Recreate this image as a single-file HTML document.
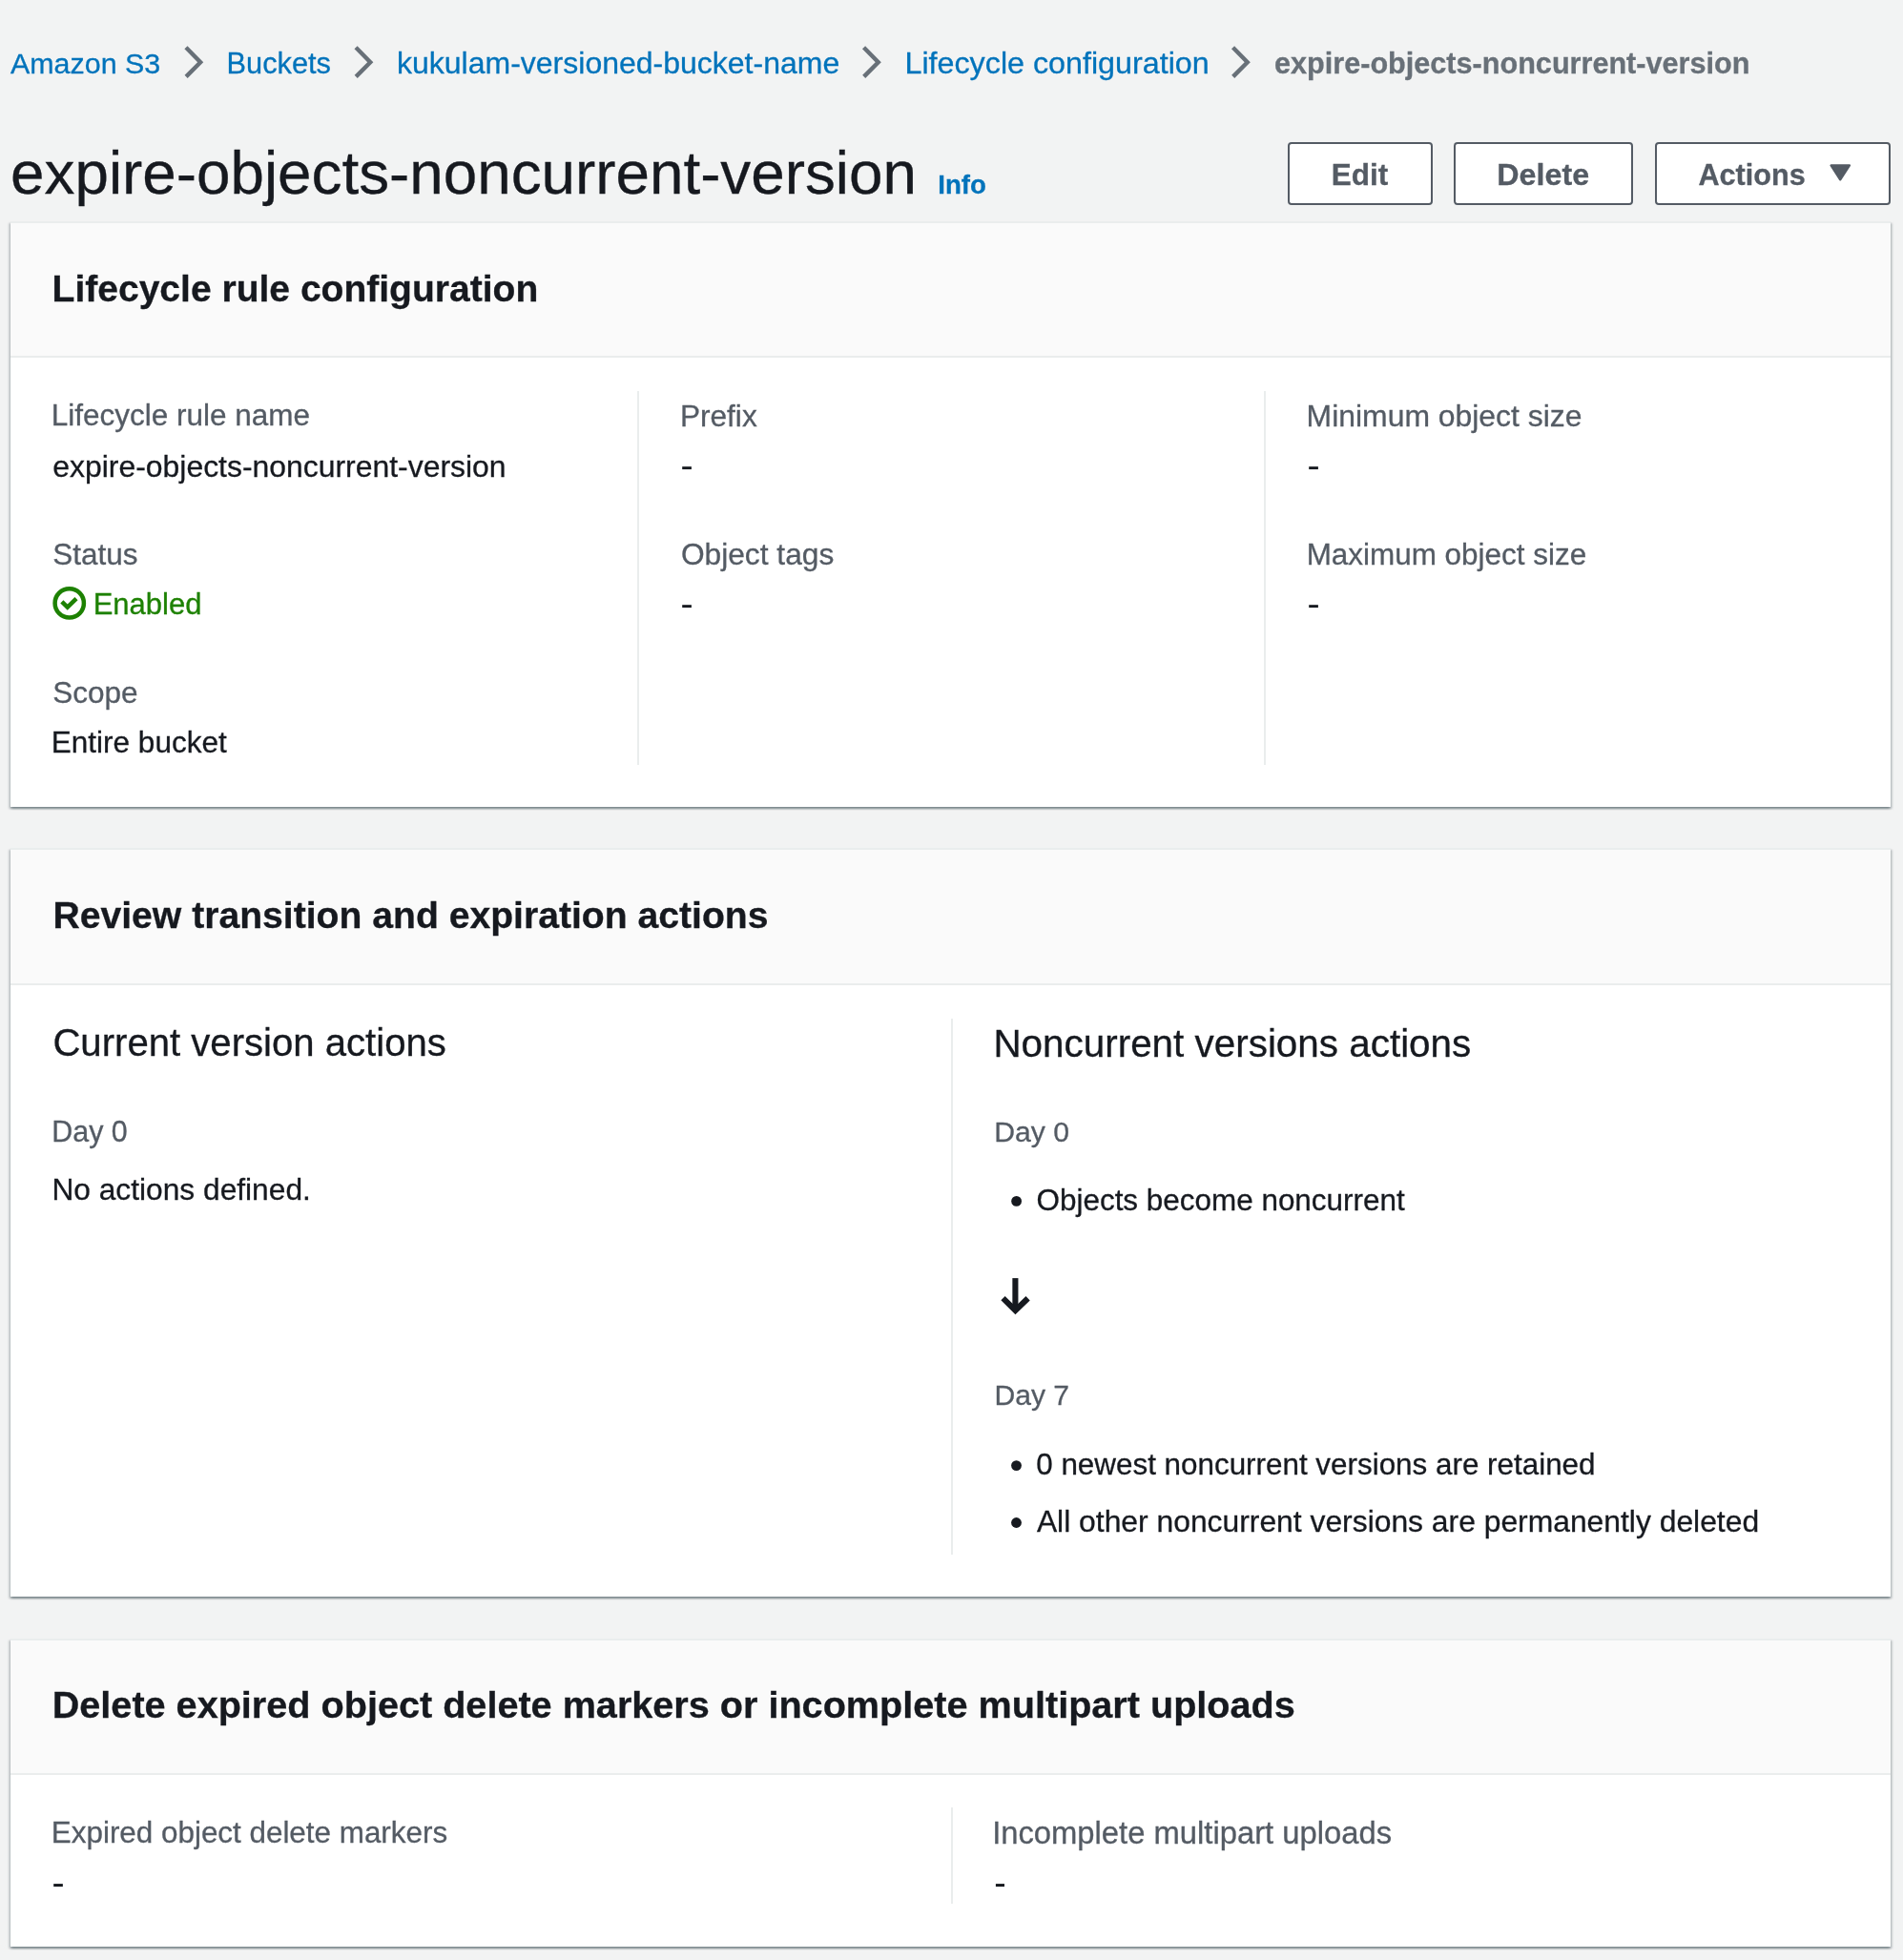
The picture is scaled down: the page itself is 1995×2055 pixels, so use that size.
<!DOCTYPE html>
<html><head><meta charset="utf-8"><title>expire-objects-noncurrent-version</title>
<style>
html,body{margin:0;padding:0}
body{width:1995px;height:2055px;background:#f2f3f3;position:relative;overflow:hidden;font-family:"Liberation Sans",sans-serif}
.tl{position:absolute;left:0;top:0;width:1995px;height:2055px;will-change:transform}
.t{position:absolute;white-space:nowrap;-webkit-text-stroke:0.3px currentColor}
.btn{position:absolute;box-sizing:border-box;border:2px solid #545b64;border-radius:4px;background:#fff;top:149px;height:65.5px}
.card{position:absolute;left:11px;width:1971px;background:#fff;border-top:2px solid #eaeded;
  box-shadow:0 2px 2px 0 rgba(0,28,36,.3),2px 2px 2px 0 rgba(0,28,36,.15),-2px 2px 2px 0 rgba(0,28,36,.15)}
.hdr{position:absolute;left:0;top:0;width:100%;background:#fafafa;border-bottom:2px solid #eaeded}
.vd{position:absolute;width:2px;background:#eaeded}
svg{position:absolute;left:0;top:0}
</style></head><body>
<div class="btn" style="left:1350px;width:152px"></div>
<div class="btn" style="left:1524px;width:188px"></div>
<div class="btn" style="left:1735px;width:247px"></div>
<div class="card" style="top:232px;height:612px"><div class="hdr" style="height:139px"></div></div>
<div class="card" style="top:889px;height:783px"><div class="hdr" style="height:140px"></div></div>
<div class="card" style="top:1718px;height:321px"><div class="hdr" style="height:139px"></div></div>
<div class="vd" style="left:668px;top:410px;height:392px"></div>
<div class="vd" style="left:1325px;top:410px;height:392px"></div>
<div class="vd" style="left:997px;top:1068px;height:562px"></div>
<div class="vd" style="left:997px;top:1895px;height:101px"></div>
<div class="tl"><div class="t" style="left:11.00px;top:51.01px;font-size:30.42px;line-height:30.42px;font-weight:400;color:#0073bb">Amazon S3</div><div class="t" style="left:237.60px;top:52.00px;font-size:30.74px;line-height:30.74px;font-weight:400;color:#0073bb">Buckets</div><div class="t" style="left:416.00px;top:50.01px;font-size:32.01px;line-height:32.01px;font-weight:400;color:#0073bb">kukulam-versioned-bucket-name</div><div class="t" style="left:948.48px;top:50.00px;font-size:32.27px;line-height:32.27px;font-weight:400;color:#0073bb">Lifecycle configuration</div><div class="t" style="left:1336.04px;top:51.00px;font-size:30.61px;line-height:30.61px;font-weight:700;color:#687078">expire-objects-noncurrent-version</div><div class="t" style="left:11.11px;top:150.31px;font-size:63.77px;line-height:63.77px;font-weight:400;color:#16191f">expire-objects-noncurrent-version</div><div class="t" style="left:983.27px;top:180.01px;font-size:27.63px;line-height:27.63px;font-weight:700;color:#0073bb">Info</div><div class="t" style="left:1395.73px;top:168.01px;font-size:31.46px;line-height:31.46px;font-weight:700;color:#545b64">Edit</div><div class="t" style="left:1569.28px;top:167.01px;font-size:32.26px;line-height:32.26px;font-weight:700;color:#545b64">Delete</div><div class="t" style="left:1780.52px;top:168.01px;font-size:30.60px;line-height:30.60px;font-weight:700;color:#545b64">Actions</div><div class="t" style="left:54.56px;top:282.61px;font-size:39.04px;line-height:39.04px;font-weight:700;color:#16191f">Lifecycle rule configuration</div><div class="t" style="left:53.84px;top:420.10px;font-size:31.47px;line-height:31.47px;font-weight:400;color:#545b64">Lifecycle rule name</div><div class="t" style="left:55.30px;top:473.50px;font-size:31.92px;line-height:31.92px;font-weight:400;color:#16191f">expire-objects-noncurrent-version</div><div class="t" style="left:55.32px;top:565.51px;font-size:31.50px;line-height:31.50px;font-weight:400;color:#545b64">Status</div><div class="t" style="left:97.68px;top:618.01px;font-size:31.00px;line-height:31.00px;font-weight:400;color:#1d8102">Enabled</div><div class="t" style="left:55.32px;top:711.01px;font-size:31.50px;line-height:31.50px;font-weight:400;color:#545b64">Scope</div><div class="t" style="left:53.84px;top:763.01px;font-size:31.50px;line-height:31.50px;font-weight:400;color:#16191f">Entire bucket</div><div class="t" style="left:712.93px;top:420.50px;font-size:31.60px;line-height:31.60px;font-weight:400;color:#545b64">Prefix</div><div class="t" style="left:713.91px;top:565.51px;font-size:31.71px;line-height:31.71px;font-weight:400;color:#545b64">Object tags</div><div class="t" style="left:1369.61px;top:420.51px;font-size:31.90px;line-height:31.90px;font-weight:400;color:#545b64">Minimum object size</div><div class="t" style="left:1369.64px;top:565.50px;font-size:31.45px;line-height:31.45px;font-weight:400;color:#545b64">Maximum object size</div><div class="t" style="left:55.45px;top:940.10px;font-size:39.14px;line-height:39.14px;font-weight:700;color:#16191f">Review transition and expiration actions</div><div class="t" style="left:55.42px;top:1072.51px;font-size:40.11px;line-height:40.11px;font-weight:400;color:#16191f">Current version actions</div><div class="t" style="left:54.22px;top:1170.81px;font-size:30.45px;line-height:30.45px;font-weight:400;color:#545b64">Day 0</div><div class="t" style="left:54.42px;top:1232.01px;font-size:31.71px;line-height:31.71px;font-weight:400;color:#16191f">No actions defined.</div><div class="t" style="left:1041.44px;top:1073.70px;font-size:40.42px;line-height:40.42px;font-weight:400;color:#16191f">Noncurrent versions actions</div><div class="t" style="left:1042.24px;top:1171.61px;font-size:30.17px;line-height:30.17px;font-weight:400;color:#545b64">Day 0</div><div class="t" style="left:1086.53px;top:1243.00px;font-size:31.44px;line-height:31.44px;font-weight:400;color:#16191f">Objects become noncurrent</div><div class="t" style="left:1042.45px;top:1448.00px;font-size:30.08px;line-height:30.08px;font-weight:400;color:#545b64">Day 7</div><div class="t" style="left:1086.22px;top:1520.01px;font-size:31.40px;line-height:31.40px;font-weight:400;color:#16191f">0 newest noncurrent versions are retained</div><div class="t" style="left:1086.90px;top:1580.00px;font-size:31.84px;line-height:31.84px;font-weight:400;color:#16191f">All other noncurrent versions are permanently deleted</div><div class="t" style="left:54.72px;top:1768.40px;font-size:39.61px;line-height:39.61px;font-weight:700;color:#16191f">Delete expired object delete markers or incomplete multipart uploads</div><div class="t" style="left:53.85px;top:1905.80px;font-size:31.40px;line-height:31.40px;font-weight:400;color:#545b64">Expired object delete markers</div><div class="t" style="left:1040.14px;top:1905.81px;font-size:32.77px;line-height:32.77px;font-weight:400;color:#545b64">Incomplete multipart uploads</div></div>
<svg width="1995" height="2055" viewBox="0 0 1995 2055">
 <g fill="none" stroke="#687078" stroke-width="4.4" stroke-linecap="butt" stroke-linejoin="miter"><path d="M194.95,49.75 L210.15,65.25 L195.10,80.4"/><path d="M373.05,49.75 L388.25,65.25 L373.20,80.4"/><path d="M905.55,49.75 L920.75,65.25 L905.70,80.4"/><path d="M1292.55,49.75 L1307.75,65.25 L1292.70,80.4"/></g>
 <path d="M1919.6,173.4 L1938.9,173.4 L1929.2,188.3 Z" fill="#545b64" stroke="#545b64" stroke-width="2.4" stroke-linejoin="round"/>
 <circle cx="72.75" cy="632.4" r="15.15" fill="none" stroke="#1d8102" stroke-width="4.5"/>
 <path d="M64.85,630.9 L70.75,636.7 L80,627.6" fill="none" stroke="#1d8102" stroke-width="4.5" stroke-linejoin="miter"/>
 <g fill="#16191f">
  <rect x="715.2" y="489.2" width="9.7" height="2.9"/>
  <rect x="715.2" y="634.2" width="9.7" height="2.9"/>
  <rect x="1372.2" y="489.2" width="9.7" height="2.9"/>
  <rect x="1372.2" y="634.2" width="9.7" height="2.9"/>
  <rect x="56.2" y="1975.1" width="9.65" height="3"/>
  <rect x="1043.9" y="1975.1" width="9.1" height="3"/>
  <circle cx="1065.6" cy="1259.4" r="5.4"/>
  <circle cx="1065.5" cy="1536.6" r="5.4"/>
  <circle cx="1065.5" cy="1596.5" r="5.4"/>
 </g>
 <g fill="none" stroke="#16191f" stroke-width="6.1" stroke-linejoin="miter">
  <path d="M1064.4,1340.1 V1372"/>
  <path d="M1051.5,1361.2 L1064.45,1374 L1077.6,1361.2"/>
 </g>
</svg>
</body></html>
